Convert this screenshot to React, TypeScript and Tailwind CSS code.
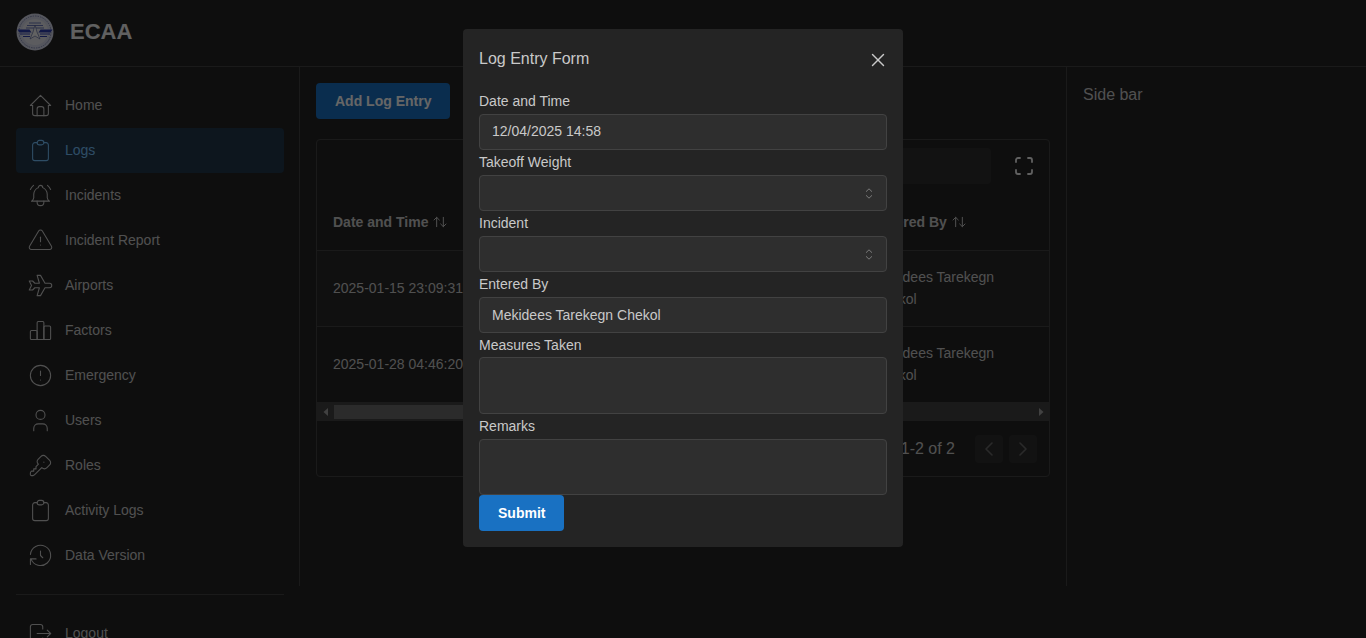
import React from 'react';
import {
  TbAlertCircle,
  TbAlertTriangle,
  TbArrowsSort,
  TbBellRinging,
  TbChartBar,
  TbChevronLeft,
  TbChevronRight,
  TbClipboard,
  TbHistory,
  TbHome,
  TbKey,
  TbLogout,
  TbMaximize,
  TbPlane,
  TbUser,
  TbX,
} from 'react-icons/tb';

const navItems = [
  { name: 'Home', icon: TbHome },
  { name: 'Logs', icon: TbClipboard, active: true },
  { name: 'Incidents', icon: TbBellRinging },
  { name: 'Incident Report', icon: TbAlertTriangle },
  { name: 'Airports', icon: TbPlane },
  { name: 'Factors', icon: TbChartBar },
  { name: 'Emergency', icon: TbAlertCircle },
  { name: 'Users', icon: TbUser },
  { name: 'Roles', icon: TbKey },
  { name: 'Activity Logs', icon: TbClipboard },
  { name: 'Data Version', icon: TbHistory },
];

const rows = ['2025-01-15 23:09:31', '2025-01-28 04:46:20'];

const Logo = () => (
  <svg width="38" height="38" viewBox="0 0 38 38" className="shrink-0">
    <circle cx="19" cy="19" r="18.5" fill="#d5d8e8" />
    <circle cx="19" cy="19" r="16" fill="none" stroke="#7b83b0" strokeWidth="1" strokeDasharray="1.5 1" />
    <circle cx="19" cy="19" r="13" fill="#e6e7ee" />
    <path d="M13 10h12M11 12.5h16M10 15h18" stroke="#6a76b8" strokeWidth="1" />
    <path d="M1.5 16.5h12l2 3h-9l-3 0z" fill="#2f3fb0" />
    <path d="M36.5 16.5h-12l-2 3h9l3 0z" fill="#2f3fb0" />
    <path d="M4 21h10M34 21h-10M7 23.5h7M31 23.5h-7" stroke="#2f3fb0" strokeWidth="1" />
    <path d="M19 12l2 7 3 7-5-3-5 3 3-7z" fill="#f4f4f6" stroke="#4a5590" strokeWidth="0.6" />
  </svg>
);

const Selector = () => (
  <svg width="8" height="11" viewBox="0 0 8 11" className="absolute right-[14px] top-[13px]" fill="none" stroke="#7c7c7c" strokeWidth="1">
    <path d="M1 3.7L4 0.8l3 2.9M1 7.3l3 2.9 3-2.9" />
  </svg>
);

const Arrow = ({ left }: { left?: boolean }) => (
  <svg width="6" height="8" viewBox="0 0 6 8" fill="#a3a3a3">
    <path d={left ? 'M5 0v8L0.5 4z' : 'M1 0v8l4.5-4z'} />
  </svg>
);

const Field = ({ label, tight, children }: { label: string; tight?: boolean; children: React.ReactNode }) => (
  <div>
    <label className={`block pt-px text-sm leading-[22px] text-[#c9c9c9] ${tight ? 'pb-px' : 'pb-[2px]'}`}>{label}</label>
    {children}
  </div>
);

const inputClass =
  'block w-full h-9 rounded border border-[#424242] bg-[#2e2e2e] px-3 text-sm text-[#c9c9c9] outline-none';

export default function App() {
  return (
    <div className="relative h-[638px] overflow-hidden bg-[#242424] font-['Liberation_Sans',Arial,sans-serif] text-[#c9c9c9]">
      {/* Header */}
      <header className="flex h-[67px] items-center border-b border-[#424242] pl-[16px] pb-[3px]">
        <Logo />
        <h1 className="ml-[16px] text-[22px] font-bold text-[#f0f0f0]">ECAA</h1>
      </header>

      <div className="flex h-[519px]">
        {/* Sidebar */}
        <aside className="w-[300px] shrink-0 border-r border-[#424242] py-4 pl-4 pr-[15px]">
          <nav>
            {navItems.map((item) => (
              <a
                key={item.name}
                className={`flex h-[45px] items-center rounded pl-[11px] text-sm ${
                  item.active ? 'bg-[#1971c2]/25 text-[#74c0fc]' : ''
                }`}
              >
                <item.icon size={27} strokeWidth={0.95} className="shrink-0" />
                <span className="ml-[11px] pb-[2px]">{item.name}</span>
              </a>
            ))}
          </nav>
          <div className="my-4 border-t border-[#424242]" />
          <a className="flex h-[45px] items-center pl-[11px] text-sm">
            <TbLogout size={27} strokeWidth={0.95} className="shrink-0" />
            <span className="ml-[11px] pb-[2px]">Logout</span>
          </a>
        </aside>

        {/* Main */}
        <main className="min-w-0 flex-1 p-4">
          <button className="h-9 rounded bg-[#1971c2] px-[19px] text-sm font-bold text-white">Add Log Entry</button>

          <div className="mt-5 rounded border border-[#424242]">
            {/* Toolbar */}
            <div className="flex h-[52px] justify-end pt-2 pr-[13px]">
              <div className="h-9 w-[400px] rounded bg-[#2e2e2e]" />
              <div className="ml-[21px] flex h-9 items-center">
                <TbMaximize size={24} strokeWidth={1.8} className="text-[#f0f0f0]" />
              </div>
            </div>

            {/* Table */}
            <div className="flex h-[59px] items-center justify-between border-b border-[#424242] pt-[2px] text-sm font-bold">
              <div className="flex items-center gap-[4px] pl-4">
                Date and Time <TbArrowsSort size={16} strokeWidth={1.5} />
              </div>
              <div className="flex w-[176px] items-center gap-[4px]">
                Entered By <TbArrowsSort size={16} strokeWidth={1.5} />
              </div>
            </div>
            {rows.map((date, i) => (
              <div
                key={date}
                className={`flex h-[76px] items-center justify-between border-b border-[#424242] pb-[2px] text-sm last:border-b-0 ${
                  i === 0 ? 'bg-[#2e2e2e]/50' : ''
                }`}
              >
                <div className="pl-4">{date}</div>
                <div className="w-[176px] pr-[30px] leading-[22px]">Mekidees Tarekegn Chekol</div>
              </div>
            ))}

            {/* Horizontal scrollbar */}
            <div className="flex h-[18px] items-center bg-[#424242]">
              <div className="flex w-[17px] shrink-0 justify-center">
                <Arrow left />
              </div>
              <div className="h-[14px] w-[300px] bg-[#6b6b6b]" />
              <div className="flex-1" />
              <div className="flex w-[17px] shrink-0 justify-center">
                <Arrow />
              </div>
            </div>

            {/* Pagination */}
            <div className="flex h-[55px] items-center justify-end pr-[12px]">
              <span className="mr-5 text-base">1-2 of 2</span>
              <button className="flex h-7 w-7 items-center justify-center rounded bg-[#2e2e2e] text-[#6a6a6a]">
                <TbChevronLeft size={24} strokeWidth={1.6} />
              </button>
              <button className="ml-[6px] flex h-7 w-7 items-center justify-center rounded bg-[#2e2e2e] text-[#6a6a6a]">
                <TbChevronRight size={24} strokeWidth={1.6} />
              </button>
            </div>
          </div>
        </main>

        {/* Right aside */}
        <aside className="w-[300px] shrink-0 border-l border-[#424242] px-4 pt-4">
          <p className="text-base leading-6">Side bar</p>
        </aside>
      </div>

      {/* Modal overlay */}
      <div className="absolute inset-0 flex items-start justify-center bg-black/60 pt-[29px]">
        <div className="w-[440px] rounded bg-[#242424] px-4 pb-4">
          <div className="flex h-[60px] items-center justify-between">
            <h2 className="text-base text-[#c9c9c9]">Log Entry Form</h2>
            <TbX size={22} strokeWidth={1.5} className="mt-px -mr-[2px] text-[#c9c9c9]" />
          </div>
          <form>
            <Field label="Date and Time">
              <input readOnly className={`${inputClass} pb-[2px]`} value="12/04/2025 14:58" />
            </Field>
            <Field label="Takeoff Weight">
              <div className="relative">
                <input readOnly className={inputClass} />
                <Selector />
              </div>
            </Field>
            <Field label="Incident">
              <div className="relative">
                <input readOnly className={inputClass} />
                <Selector />
              </div>
            </Field>
            <Field label="Entered By">
              <input readOnly className={`${inputClass} text-[#bdbdbd]`} value="Mekidees Tarekegn Chekol" />
            </Field>
            <Field label="Measures Taken" tight>
              <textarea readOnly className={`${inputClass} h-[57px] resize-none`} />
            </Field>
            <Field label="Remarks">
              <textarea readOnly className={`${inputClass} h-[56px] resize-none`} />
            </Field>
            <button type="button" className="block h-9 rounded bg-[#1971c2] px-[19px] text-sm font-bold text-white">
              Submit
            </button>
          </form>
        </div>
      </div>
    </div>
  );
}
